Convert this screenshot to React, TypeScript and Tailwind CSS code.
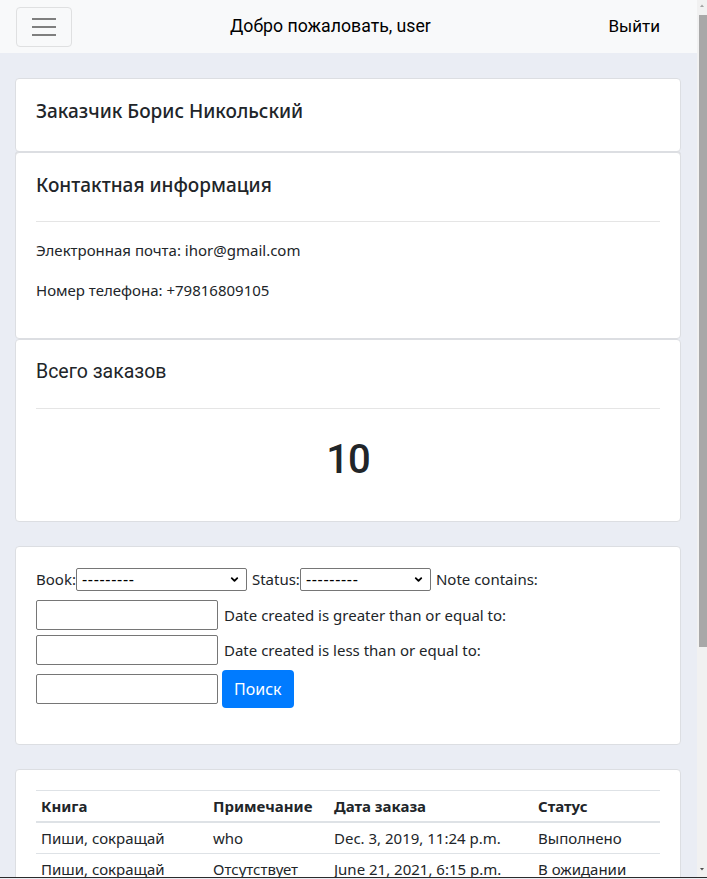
import { ChevronDown } from 'lucide-react';

const body = "font-['Noto_Sans',sans-serif]";
const narrow = "font-['Roboto',sans-serif]";

const orders = [
  { book: 'Пиши, сокращай', note: 'who', date: 'Dec. 3, 2019, 11:24 p.m.', status: 'Выполнено' },
  { book: 'Пиши, сокращай', note: 'Отсутствует', date: 'June 21, 2021, 6:15 p.m.', status: 'В ожидании' },
];

function FakeSelect({ width }: { width: string }) {
  return (
    <div className={`relative h-[23px] ${width}`}>
      <select className="h-full w-full appearance-none rounded-[2px] border border-[#767676] bg-white pl-[5px] text-[16px] leading-none tracking-[0.7px] text-black">
        <option>---------</option>
      </select>
      <ChevronDown className="pointer-events-none absolute right-[7px] top-[6px] h-[11px] w-[11px] text-black" strokeWidth={4} />
    </div>
  );
}

function Card({ children, className = '' }: { children: React.ReactNode; className?: string }) {
  return (
    <div className={`rounded-[4px] border border-[#dcdee2] bg-white px-5 ${className}`}>{children}</div>
  );
}

export default function App() {
  return (
    <div className={`flex h-[879px] w-full flex-col overflow-hidden bg-[#eaedf4] text-[#212529] ${body}`}>
      <div className="flex h-[877px] shrink-0">
        <div className="flex min-w-0 flex-1 flex-col overflow-hidden">
          {/* navbar */}
          <nav className="flex h-[53px] shrink-0 items-center bg-[#f8f9fa] pl-4 pr-[37px]">
            <button className="flex h-[40px] w-[56px] flex-col items-center justify-center gap-[6px] rounded-[4px] border border-[#dfe0e1]">
              <span className="h-[2px] w-[24px] bg-[#7f7f7f]" />
              <span className="h-[2px] w-[24px] bg-[#7f7f7f]" />
              <span className="h-[2px] w-[24px] bg-[#7f7f7f]" />
            </button>
            <span className={`ml-[158px] text-[17.7px] text-black ${narrow}`}>Добро пожаловать, user</span>
            <span className={`ml-auto text-[17px] text-black ${narrow}`}>Выйти</span>
          </nav>

          <main className="flex flex-col pl-[15px] pr-[16px] pt-[25px]">
            <Card className="py-5">
              <h5 className="mb-2 text-[19px] font-medium leading-[24px]">Заказчик Борис Никольский</h5>
            </Card>

            <Card className="pb-[36px] pt-5 shadow-[0_-1px_0_#dcdee2]">
              <h5 className="text-[19px] font-medium leading-[24px]">Контактная информация</h5>
              <hr className="mb-4 mt-[24px] border-t border-[#e5e5e5]" />
              <p className="mb-4 text-[15px] leading-[24px]">Электронная почта: ihor@gmail.com</p>
              <p className="text-[15px] leading-[24px]">Номер телефона: +79816809105</p>
            </Card>

            <Card className="py-5">
              <h5 className={`text-[19.5px] leading-[24px] ${narrow}`}>Всего заказов</h5>
              <hr className="mb-4 mt-[24px] border-t border-[#e5e5e5]" />
              <h1 className={`pb-[17px] pt-[11px] text-center text-[40px] font-medium leading-[48px] tracking-[-1px] ${narrow}`}>10</h1>
            </Card>

            <Card className="mt-[24px] pb-[36px] pt-5 text-[15px]">
              <div className="flex h-6 items-center">
                <span>Book:</span>
                <FakeSelect width="w-[171px]" />
                <span className="ml-[5px]">Status:</span>
                <FakeSelect width="w-[131px]" />
                <span className="ml-[5px]">Note contains:</span>
              </div>
              <div className="mt-[9px] flex items-center gap-[6px]">
                <input className="h-[30px] w-[182px] rounded-[2px] border border-[#767676]" />
                <span>Date created is greater than or equal to:</span>
              </div>
              <div className="mt-[5px] flex items-center gap-[6px]">
                <input className="h-[30px] w-[182px] rounded-[2px] border border-[#767676]" />
                <span>Date created is less than or equal to:</span>
              </div>
              <div className="mt-[5px] flex items-center gap-[4px]">
                <input className="h-[30px] w-[182px] rounded-[2px] border border-[#767676]" />
                <button className="h-[38px] rounded-[4px] bg-[#007bff] px-[12px] text-[16px] text-white">Поиск</button>
              </div>
            </Card>

            <Card className="mt-[24px] pt-5">
              <table className="w-full border-t border-[#dee2e6] text-left text-[15px]">
                <thead>
                  <tr className="border-b-2 border-[#dee2e6]">
                    <th className="w-[172px] px-[5px] py-[4px] font-bold leading-[22px]">Книга</th>
                    <th className="w-[121px] px-[5px] py-[4px] font-bold leading-[22px]">Примечание</th>
                    <th className="w-[204px] px-[5px] py-[4px] font-bold leading-[22px]">Дата заказа</th>
                    <th className="px-[5px] py-[4px] font-bold leading-[22px]">Статус</th>
                  </tr>
                </thead>
                <tbody>
                  {orders.map((o, i) => (
                    <tr key={i} className="border-b border-[#dee2e6]">
                      <td className="px-[5px] py-[4px] leading-[22px]">{o.book}</td>
                      <td className="px-[5px] py-[4px] leading-[22px]">{o.note}</td>
                      <td className="px-[5px] py-[4px] leading-[22px]">{o.date}</td>
                      <td className="px-[5px] py-[4px] leading-[22px]">{o.status}</td>
                    </tr>
                  ))}
                </tbody>
              </table>
            </Card>
          </main>
        </div>

        {/* window scrollbar */}
        <div className="flex w-[10px] shrink-0 flex-col bg-[#f1f1f1]">
          <svg viewBox="0 0 10 10" className="h-[10px] w-[10px] shrink-0">
            <path d="M3 7 L5 4.5 L7 7 Z" fill="#a3a3a3" />
          </svg>
          <div className="ml-[2px] mt-[5px] h-[632px] w-[8px] bg-[#a8a8a8]" />
          <div className="flex-1" />
          <svg viewBox="0 0 10 10" className="mb-[2px] h-[10px] w-[10px] shrink-0">
            <path d="M3 3 L5 5.5 L7 3 Z" fill="#505050" />
          </svg>
        </div>
      </div>
      <div className="h-px shrink-0 bg-[#2b2b2b]" />
    </div>
  );
}
